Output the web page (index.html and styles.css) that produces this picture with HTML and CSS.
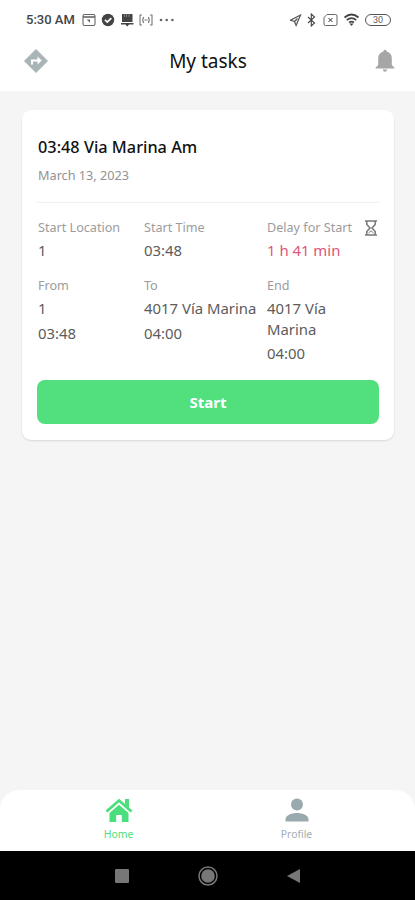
FILE: index.html
```
<!DOCTYPE html>
<html lang="en">
<head>
    <meta charset="utf-8">
    <title>My tasks</title>
    <link rel="stylesheet" href="styles.css">
</head>
<body>
    <div class="status-bar">
        <span class="clock">5:30 AM</span>
        <div class="status-left">
            <svg width="14" height="14" viewBox="0 0 14 14" fill="none" stroke="#666" stroke-width="1.1"><rect x="1" y="1.5" width="12" height="11" rx="1.5"/><path d="M1 4h12" stroke-width="1.6"/><path d="M5.5 6.5l2 2v-2"/></svg>
            <svg width="14" height="14" viewBox="0 0 14 14"><circle cx="7" cy="7" r="6.2" fill="#444"/><path d="M4 6.8l2.3 2.3 4-4" fill="none" stroke="#fff" stroke-width="1.7"/></svg>
            <svg width="14" height="14" viewBox="0 0 14 14"><path d="M2 1h10.5v8H2zM1 10h12.5v1.6H1zM5 11h4.5l-2.2 2.5z" fill="#444"/><path d="M4.5 1v3M6.5 1v3M9 1v3" stroke="#999" stroke-width=".7"/></svg>
            <svg width="14" height="14" viewBox="0 0 14 14" fill="none" stroke="#777" stroke-width="1.1"><path d="M3 2H1v10h2M11 2h2v10h-2M4.7 4Q2.8 7 4.7 10M9.3 4q1.9 3 0 6M5.5 7h3"/></svg>
            <svg width="16" height="14" viewBox="0 0 16 14" fill="#666"><circle cx="3" cy="7" r="1.3"/><circle cx="8.7" cy="7" r="1.3"/><circle cx="14.4" cy="7" r="1.3"/></svg>
        </div>
        <div class="status-right">
            <svg width="12" height="14" viewBox="0 0 12 14" fill="none" stroke="#555" stroke-width="1.2"><path d="M10.500 2L.5 7.200l4 1.300L6.100 12.500z"/><path d="M4.500 8.500l3-3"/></svg>
            <svg width="10" height="14" viewBox="0 0 10 14" fill="none" stroke="#444" stroke-width="1.1"><path d="M1 4l6.500 6-3.200 3V1l3.200 3L1 10"/></svg>
            <svg class="sim" width="15" height="14" viewBox="0 0 15 14" fill="none" stroke="#666"><path d="M4 1.500h8.500q1.500 0 1.500 1.500v8q0 1.500-1.500 1.500h-10Q1 12.500 1 11V4.500z"/><path d="M5.500 5l4 4M9.500 5l-4 4" stroke="#333"/></svg>
            <svg width="16" height="14" viewBox="0 0 16 14" fill="none" stroke="#444" stroke-width="1.7"><path d="M.5 4.500q7-6 14 0M2.800 7q4.700-3.800 9.400 0M5.100 9.500q2.400-1.900 4.800 0"/><path d="M5.500 10.500h4l-2 2.500z" fill="#444" stroke="none"/></svg>
            <span class="battery">30</span>
        </div>
    </div>

    <header class="header">
        <svg width="26" height="26" viewBox="0 0 26 26"><path d="M13 1.500L24.500 13 13 24.500 1.500 13z" fill="#a9b4b7" stroke="#a9b4b7" stroke-linejoin="round"/><path d="M8 16.500v-5h6.500V8.500l4.200 4-4.200 4v-3H10v3z" fill="#fff"/></svg>
        <h1>My tasks</h1>
        <svg width="22" height="24" viewBox="0 0 22 24" fill="#a6a6a6"><path d="M11 .8c1 0 1.600.8 1.600 1.800 3.400.8 5.200 3.300 5.200 6.800v6c0 1.500 2.700 2.200 2.700 4H1.500c0-1.800 2.700-2.500 2.700-4v-6c0-3.500 1.800-6 5.200-6.800 0-1 .6-1.800 1.600-1.800z"/><path d="M8.700 20.500h4.600q-.5 2.300-2.300 2.300t-2.300-2.300z"/></svg>
    </header>

    <main class="content">
        <div class="card">
            <h2>03:48 Via Marina Am</h2>
            <p class="date">March 13, 2023</p>
            <div class="grid">
                <div>
                    <div class="label">Start Location</div>
                    <div class="value">1</div>
                </div>
                <div>
                    <div class="label">Start Time</div>
                    <div class="value">03:48</div>
                </div>
                <div>
                    <div class="label delay">Delay for Start
                        <svg width="14" height="16" viewBox="0 0 14 16" fill="none" stroke="#777" stroke-width="1.5"><path d="M1 1h12M1 15h12M2.800 1v3.500L6 8l-3.200 3.500V15M11.200 1v3.500L8 8l3.200 3.500V15"/><path d="M4.500 13L7 10.800 9.500 13" stroke-width="1"/></svg>
                    </div>
                    <div class="value late">1 h 41 min</div>
                </div>
                <div>
                    <div class="label">From</div>
                    <div class="value">1</div>
                    <div class="value time">03:48</div>
                </div>
                <div>
                    <div class="label">To</div>
                    <div class="value">4017 Vía Marina</div>
                    <div class="value time">04:00</div>
                </div>
                <div>
                    <div class="label">End</div>
                    <div class="value end">4017 Vía Marina</div>
                    <div class="value time">04:00</div>
                </div>
            </div>
            <button class="start">Start</button>
        </div>
    </main>

    <nav class="tabs">
        <div class="tab active">
            <svg width="28" height="24" viewBox="0 0 28 24"><path d="M1.500 13.500L14 2.500l12.500 11" fill="none" stroke="#4ade7c" stroke-width="2.8"/><path d="M20 1h4v9l-4-3.500zM14 6.800l9.500 8.300V24h-6.700v-7h-5.600v7H4.500v-8.900z" fill="#4ade7c"/></svg>
            <span>Home</span>
        </div>
        <div class="tab">
            <svg width="24" height="24" viewBox="0 0 24 24" fill="#9aa9ad"><circle cx="12" cy="6.5" r="6"/><path d="M.5 23.500v-2.300C.5 17 7 15 12 15s11.500 2 11.500 6.200v2.300z"/></svg>
            <span>Profile</span>
        </div>
    </nav>

    <div class="system-bar">
        <svg width="14" height="14"><rect width="14" height="14" rx="1" fill="#777"/></svg>
        <svg width="20" height="20"><circle cx="10" cy="10" r="9" fill="none" stroke="#777" stroke-width="1.5"/><circle cx="10" cy="10" r="6.8" fill="#777"/></svg>
        <svg width="14" height="14"><path d="M13 0v14L0 7z" fill="#777"/></svg>
    </div>
</body>
</html>
```
FILE: styles.css
```
* {
    box-sizing: border-box;
}

body {
    margin: 0;
    height: 100vh;
    display: flex;
    flex-direction: column;
    background-color: #f5f5f5;
    font-family: "Noto Sans", sans-serif;
    color: #5c5c5c;
}

svg {
    display: block;
    flex-shrink: 0;
}

h1, h2, p {
    margin: 0;
}

.status-bar {
    height: 39px;
    padding: 0 24px 0 26px;
    display: flex;
    align-items: center;
    background-color: #fff;
}

.clock {
    width: 56px;
    font: 500 13px Roboto, sans-serif;
    color: #444;
    white-space: nowrap;
}

.status-left, .status-right {
    display: flex;
    align-items: center;
    gap: 5px;
}

.status-right {
    margin-left: auto;
}

.sim {
    margin: 0 1px;
}

.battery {
    width: 26px;
    height: 12px;
    border: 1px solid #555;
    border-radius: 6px;
    font: 9px/10px Roboto, sans-serif;
    text-align: center;
}

.header {
    height: 52px;
    padding: 0 19px 8px 23px;
    display: grid;
    grid-template-columns: 26px 1fr 22px;
    align-items: center;
    background-color: #fff;
}

.header h1 {
    padding-right: 7px;
    font-size: 19px;
    font-weight: 400;
    text-align: center;
    color: #111;
}

.content {
    flex: 1;
    padding: 19px 21px 20px 22px;
}

.card {
    height: 330px;
    padding: 25px 15px 16px 15px;
    border-radius: 9px;
    background-color: #fff;
    box-shadow: 0 1px 2px rgba(0, 0, 0, 0.12);
}

.card h2 {
    font-size: 16.3px;
    font-weight: 500;
    line-height: 24px;
    color: #111;
    padding-left: 1px;
}

.date {
    margin: 6px 0 17px;
    padding-left: 1px;
    font-size: 12.7px;
    line-height: 20px;
    color: #929292;
}

.grid {
    display: grid;
    grid-template-columns: 106px 123px 1fr;
    row-gap: 15px;
    padding: 16px 0 0 1px;
    border-top: 1px solid #f0f0f0;
    height: 178px;
    align-content: start;
}

.label {
    font-size: 12.6px;
    line-height: 18px;
    color: #9c9c9c;
}

.delay {
    display: flex;
    align-items: center;
    justify-content: space-between;
    padding-right: 1px;
    white-space: nowrap;
}

.value {
    margin-top: 3px;
    font-size: 14.9px;
    line-height: 21px;
    white-space: nowrap;
}

.label + .value {
    margin-bottom: 4px;
}

.time {
    margin: 0 0 1px;
}

/* the first row has no time under its values */
.grid > div:nth-child(-n+3) .value {
    margin-bottom: 1px;
}

.end {
    width: 80px;
    line-height: 20.5px;
    white-space: normal;
}

.late {
    color: #e0557a;
}

.start {
    display: block;
    width: 100%;
    height: 44px;
    border: none;
    border-radius: 8px;
    background-color: #52df7e;
    color: #fff;
    font: bold 15px "Noto Sans", sans-serif;
}

.tabs {
    height: 61px;
    display: flex;
    justify-content: center;
    background-color: #fff;
    border-radius: 20px 20px 0 0;
}

.tab {
    width: 178px;
    padding-top: 8px;
    display: flex;
    flex-direction: column;
    align-items: center;
    font-size: 10.4px;
    line-height: 15px;
    gap: 5px;
    color: #a5aeb0;
}

.active {
    color: #4ade7c;
}

.system-bar {
    height: 49px;
    display: flex;
    align-items: center;
    justify-content: center;
    gap: 69px;
    background-color: #000;
}
```
